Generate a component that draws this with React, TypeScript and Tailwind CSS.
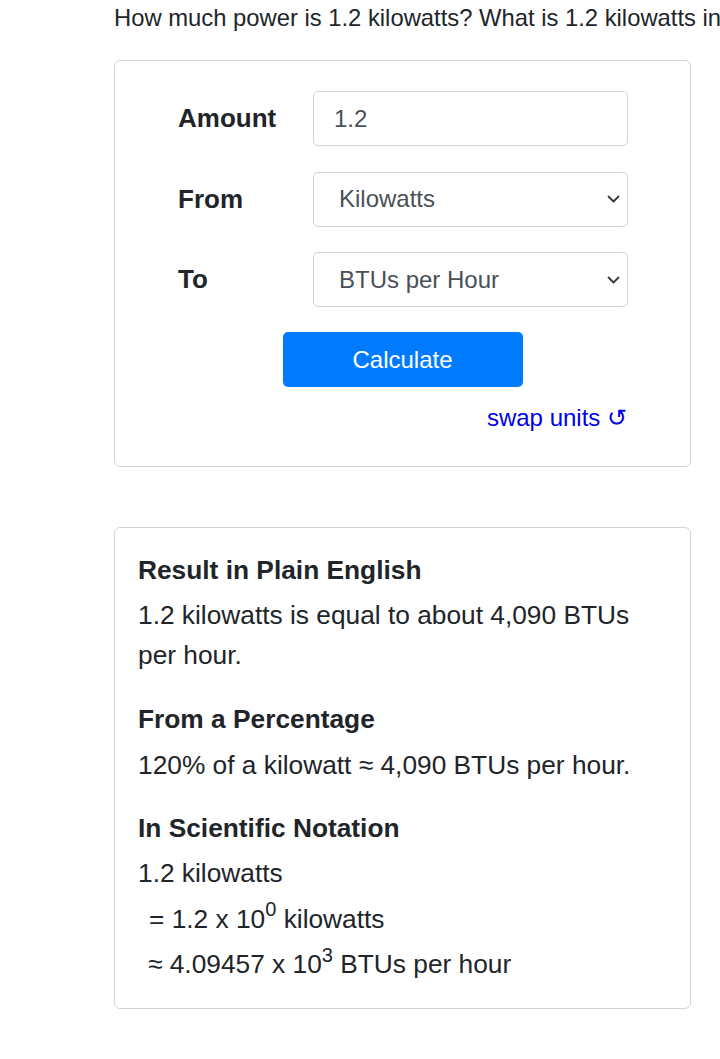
import React from "react";

const Chevron = () => (
  <svg width="13" height="8" viewBox="0 0 13 8" className="absolute right-[7px] top-1/2 -translate-y-1/2" fill="none">
    <path d="M1.5 1.5l5 5 5-5" stroke="#343a40" strokeWidth="1.8" strokeLinecap="round" strokeLinejoin="round" />
  </svg>
);

const Select = ({ value }: { value: string }) => (
  <div className="relative h-[55px] w-[315px] rounded-[5px] border border-[#ced4da] bg-white flex items-center pl-[25px] text-[24px] text-[#495057]">
    {value}
    <Chevron />
  </div>
);

export default function App() {
  return (
    <div
      className="min-h-screen bg-white text-[#212529] overflow-hidden"
      style={{ fontFamily: '"Liberation Sans", Arial, sans-serif' }}
    >
      <div className="pl-[114px]">
        <p className="whitespace-nowrap text-[23.8px] leading-[36px] pt-0">
          How much power is 1.2 kilowatts? What is 1.2 kilowatts in BTUs per hour?
        </p>

        <div className="mt-[24px] w-[577px] rounded-[6px] border border-[#d3d3d3] pt-[30px] pb-[34px] pl-[63px] pr-[63px]">
          <div className="grid grid-cols-[135px_315px] gap-y-[25.5px] items-center">
            <div className="text-[26px] font-bold">Amount</div>
            <div className="h-[55px] w-[315px] rounded-[5px] border border-[#ced4da] flex items-center pl-[20px] text-[24px] text-[#495057]">
              1.2
            </div>
            <div className="text-[26px] font-bold">From</div>
            <Select value="Kilowatts" />
            <div className="text-[26px] font-bold">To</div>
            <Select value="BTUs per Hour" />
          </div>
          <div className="flex justify-center mt-[25px]">
            <button className="h-[55px] w-[240px] rounded-[5px] bg-[#007bff] text-white text-[24px]">
              Calculate
            </button>
          </div>
          <div className="mt-[17px] flex justify-end text-[24px] leading-[28px] text-[#0000ee]">
            swap units ↺
          </div>
        </div>

        <div className="mt-[60px] w-[577px] rounded-[6px] border border-[#d3d3d3] pt-[22px] pb-[20px] px-[23px] text-[26.3px]">
          <h5 className="font-bold leading-[40px]">Result in Plain English</h5>
          <p className="mt-[5px] leading-[40px]">1.2 kilowatts is equal to about 4,090 BTUs per hour.</p>

          <h5 className="mt-[24px] font-bold leading-[40px]">From a Percentage</h5>
          <p className="mt-[6px] leading-[40px]">120% of a kilowatt ≈ 4,090 BTUs per hour.</p>

          <h5 className="mt-[23px] font-bold leading-[40px]">In Scientific Notation</h5>
          <div className="mt-[3px]">
            <div className="h-[45.5px] flex items-center">1.2 kilowatts</div>
            <div className="h-[45.5px] flex items-center whitespace-pre pl-[11px]">
              {"= 1.2 x 10"}
              <sup className="text-[20px] relative -top-[10px] leading-none">0</sup>
              {" kilowatts"}
            </div>
            <div className="h-[46px] flex items-center whitespace-pre pl-[10px]">
              {"≈ 4.09457 x 10"}
              <sup className="text-[20px] relative -top-[10px] leading-none">3</sup>
              {" BTUs per hour"}
            </div>
          </div>
        </div>
      </div>
    </div>
  );
}
